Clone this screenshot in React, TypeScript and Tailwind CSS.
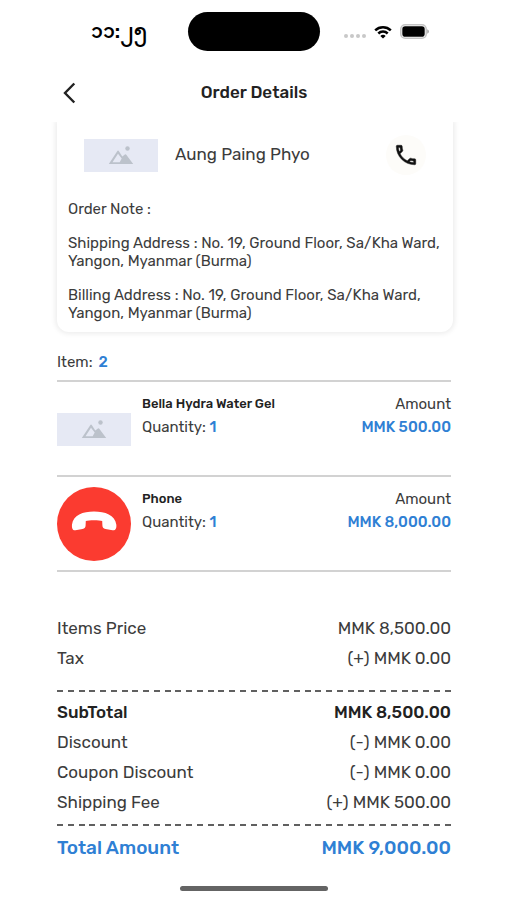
import React from 'react';

const items = [
  { id: 1, name: 'Bella Hydra Water Gel', quantity: 1, amount: 'MMK 500.00', image: null },
  { id: 2, name: 'Phone', quantity: 1, amount: 'MMK 8,000.00', image: 'phone' },
];

const Placeholder = () => (
  <div className="flex h-[33px] w-[74px] shrink-0 items-center justify-center bg-[#e6e9f4]">
    <svg viewBox="0 0 26 20" className="h-5 w-[26px] text-[#bcc2cb]" fill="currentColor">
      <circle cx="19.5" cy="3.5" r="2.2" />
      <path d="M.8 19 9.2 6.2a1 1 0 0 1 1.7 0l3.4 5.2 2.6-1.8a1 1 0 0 1 1.4.2L25.2 19ZM4.5 17.2h7.2l2-3.600L10 8.8Z" fillRule="evenodd" />
    </svg>
  </div>
);

const HangUpPicture = () => (
  <svg viewBox="0 0 74 74" className="h-[74px] w-[74px] shrink-0">
    <circle cx="37" cy="37" r="37" fill="#fb3b30" />
    <path
      d="M15 37.5C16 28 26 24.5 37 24.5S58 28 59.3 37.5C59.8 41.5 58.3 43.8 55.5 43.3L48.5 42C46.2 41.5 45.5 40.5 45.4 38.5L45.2 34C42.5 32.9 31.5 32.9 28.8 34L28.6 38.5C28.5 40.5 27.8 41.5 25.5 42L18.5 43.3C15.9 43.8 14.6 41.5 15 37.5Z"
      fill="#fff"
    />
  </svg>
);

const DashedLine = () => (
  <div className="flex h-[2px] justify-between">
    {Array.from({ length: 37 }, (_, i) => (
      <span key={i} className="w-[6px] bg-[#606060]" />
    ))}
  </div>
);

const PriceRow = ({ label, value, bold = false }: { label: string; value: string; bold?: boolean }) => (
  <div
    className={
      bold
        ? 'flex h-[30px] items-center justify-between text-[17px] font-medium text-[#222]'
        : 'flex h-[30px] items-center justify-between text-[17px] text-[#3c3c3c]'
    }
  >
    <dt>{label}</dt>
    <dd>{value}</dd>
  </div>
);

const StatusBar = () => (
  <div className="grid grid-cols-[1fr_132px_1fr] items-center pt-3">
    <span className="pr-10 text-right text-[19px] leading-6 font-semibold text-black">၁၁:၂၅</span>
    <div className="h-[39px] rounded-full bg-black" />
    <div className="flex items-center gap-2 pl-6">
      <div className="flex gap-[2px] pt-[9px]">
        <span className="h-1 w-1 rounded-full bg-[#c8c8c8]" />
        <span className="h-1 w-1 rounded-full bg-[#c8c8c8]" />
        <span className="h-1 w-1 rounded-full bg-[#c8c8c8]" />
        <span className="h-1 w-1 rounded-full bg-[#c8c8c8]" />
      </div>
      <svg viewBox="0 0 18 14" className="h-[14px] w-[18px]" fill="none" stroke="#000" strokeWidth="2.5">
        <path d="M1.2 5.3a11.3 11.3 0 0 1 15.6 0" />
        <path d="M4.3 8.5a6.8 6.8 0 0 1 9.4 0" />
        <path d="M9 13.6 6.3 10.9a4 4 0 0 1 5.4 0Z" fill="#000" stroke="none" />
      </svg>
      <svg viewBox="0 0 29 15" className="h-[15px] w-[29px]">
        <rect x=".8" y=".8" width="25.4" height="13.4" rx="4.3" fill="#fff" stroke="#c4c4c4" strokeWidth="1.6" />
        <rect x="2.3" y="2.3" width="22.4" height="10.4" rx="2.8" fill="#000" />
        <path d="M27.3 5.3c2 .8 2 3.6 0 4.4Z" fill="#999" />
      </svg>
    </div>
  </div>
);

const App = () => {
  return (
    <div className="min-h-screen bg-white font-['Rubik','Roboto','Noto_Sans_Myanmar',sans-serif] text-[#3c3c3c]">
      <StatusBar />

      {/* Header */}
      <header className="grid h-[71px] grid-cols-[1fr_auto_1fr] items-center pt-[13px] pr-14 pl-[57px]">
        <button type="button" aria-label="Back" className="flex h-8 w-6 items-center justify-center">
          <svg viewBox="0 0 14 22" className="h-[22px] w-[14px]" fill="none" stroke="#222" strokeWidth="2.4">
            <path d="M12.3 1.5 3 11l9.3 9.5" />
          </svg>
        </button>
        <h1 className="text-[17px] font-medium text-[#222]">Order Details</h1>
      </header>

      {/* Customer card */}
      <section className="overflow-hidden pr-[54px] pb-3 pl-[57px]">
        <div className="rounded-b-xl px-[11px] pt-3 pb-[10px] shadow-[0_0_5px_2px_rgba(0,0,0,0.07)]">
          <div className="flex h-[42px] items-center pr-4 pl-4">
            <Placeholder />
            <p className="ml-[17px] flex-1 text-[17px]">Aung Paing Phyo</p>
            <button type="button" aria-label="Call customer" className="flex h-10 w-10 items-center justify-center rounded-full bg-[#fdfcf9]">
              <svg viewBox="0 0 24 24" className="h-[26px] w-[26px]" fill="#111" stroke="#111" strokeWidth=".4">
                <path d="M6.54 5c.06.89.21 1.76.45 2.59l-1.2 1.2c-.41-1.2-.67-2.47-.76-3.79h1.51m9.86 12.02c.85.24 1.72.39 2.6.45v1.49c-1.32-.09-2.59-.35-3.8-.75l1.2-1.19M7.5 3H4c-.55 0-1 .45-1 1 0 9.39 7.61 17 17 17 .55 0 1-.45 1-1v-3.49c0-.55-.45-1-1-1-1.24 0-2.45-.2-3.57-.57-.1-.04-.21-.05-.31-.05-.26 0-.51.1-.71.29l-2.2 2.2c-2.83-1.45-5.15-3.76-6.59-6.59l2.2-2.2c.28-.28.36-.67.25-1.02C8.7 6.45 8.5 5.25 8.5 4c0-.55-.45-1-1-1Z" />
              </svg>
            </button>
          </div>
          <div className="mt-6 flex flex-col gap-4 text-[15px] leading-[18px]">
            <p>Order Note :</p>
            <p>Shipping Address : No. 19, Ground Floor, Sa/Kha Ward, Yangon, Myanmar (Burma)</p>
            <p>Billing Address : No. 19, Ground Floor, Sa/Kha Ward, Yangon, Myanmar (Burma)</p>
          </div>
        </div>
      </section>

      <main className="pr-14 pl-[57px]">
        {/* Items */}
        <p className="flex h-9 items-center gap-[6px] text-[15px]">
          Item: <span className="font-medium text-[#2f80d4]">2</span>
        </p>
        <ul className="border-t-2 border-[#d2d2d2]">
          {items.map((item) => (
            <li key={item.id} className="flex h-[95px] border-b-2 border-[#d2d2d2] pt-[10px]">
              <div className="flex h-[74px] items-center">{item.image ? <HangUpPicture /> : <Placeholder />}</div>
              <div className="ml-[11px] flex-1">
                <h2 className="text-[13px] leading-6 font-medium text-[#222]">{item.name}</h2>
                <p className="text-[15px] leading-[22px]">
                  Quantity: <span className="font-medium text-[#2f80d4]">{item.quantity}</span>
                </p>
              </div>
              <div className="text-right text-[15px]">
                <p className="leading-6">Amount</p>
                <p className="leading-[22px] font-medium text-[#2f80d4]">{item.amount}</p>
              </div>
            </li>
          ))}
        </ul>

        {/* Price summary */}
        <dl className="pt-[42px]">
          <PriceRow label="Items Price" value="MMK 8,500.00" />
          <PriceRow label="Tax" value="(+) MMK 0.00" />
          <div className="pt-4 pb-[6px]">
            <DashedLine />
          </div>
          <PriceRow label="SubTotal" value="MMK 8,500.00" bold />
          <PriceRow label="Discount" value="(-) MMK 0.00" />
          <PriceRow label="Coupon Discount" value="(-) MMK 0.00" />
          <PriceRow label="Shipping Fee" value="(+) MMK 500.00" />
          <div className="pt-[6px] pb-2">
            <DashedLine />
          </div>
          <div className="flex h-7 items-center justify-between text-[19px] font-medium text-[#2f80d4]">
            <dt>Total Amount</dt>
            <dd>MMK 9,000.00</dd>
          </div>
        </dl>
      </main>

      <div className="mx-auto mt-6 h-[5px] w-[148px] rounded-full bg-[#646464]" />
    </div>
  );
};

export default App;
